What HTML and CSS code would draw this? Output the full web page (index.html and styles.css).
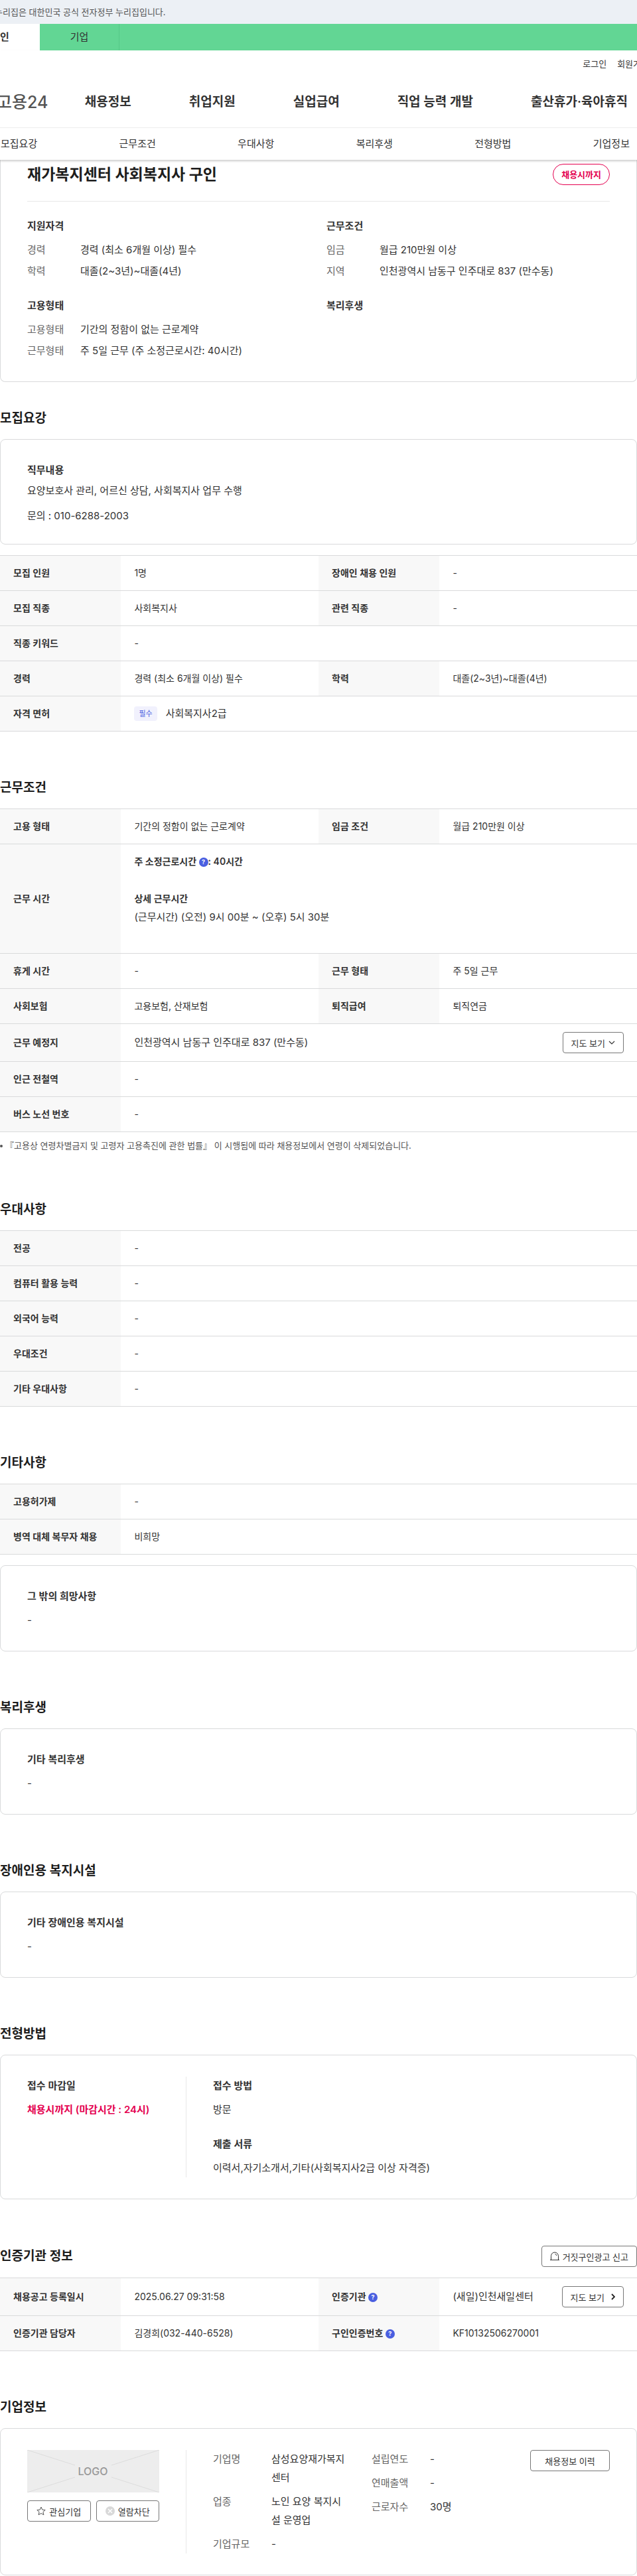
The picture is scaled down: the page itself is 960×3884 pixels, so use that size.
FILE: index.html
```html
<!DOCTYPE html>
<html lang="ko">
<head>
  <meta charset="UTF-8">
  <meta name="viewport" content="width=device-width, initial-scale=1.0">
  <title>고용24 채용정보</title>
  <link rel="stylesheet" href="styles.css">
</head>
<body>
  <div class="gov-bar"><p>누리집은 대한민국 공식 전자정부 누리집입니다.</p></div>

  <nav class="member-tabs">
    <a href="#" class="active">개인</a>
    <a href="#">기업</a>
  </nav>

  <header>
    <div class="util">
      <a href="#">로그인</a>
      <a href="#">회원가입</a>
    </div>
    <div class="gnb">
      <a href="#" class="logo">고용24</a>
      <nav>
        <a href="#">채용정보</a>
        <a href="#">취업지원</a>
        <a href="#">실업급여</a>
        <a href="#">직업 능력 개발</a>
        <a href="#">출산휴가·육아휴직</a>
      </nav>
    </div>
    <nav class="anchor-tabs">
      <a href="#recruit">모집요강</a>
      <a href="#work">근무조건</a>
      <a href="#prefer">우대사항</a>
      <a href="#welfare">복리후생</a>
      <a href="#method">전형방법</a>
      <a href="#company">기업정보</a>
    </nav>
  </header>

  <main>
    <div class="card summary">
      <div class="summary-title">
        <h1>재가복지센터 사회복지사 구인</h1>
        <span class="deadline">채용시까지</span>
      </div>
      <div class="summary-grid">
        <div>
          <h3>지원자격</h3>
          <dl>
            <dt>경력</dt><dd>경력 (최소 6개월 이상) 필수</dd>
            <dt>학력</dt><dd>대졸(2~3년)~대졸(4년)</dd>
          </dl>
        </div>
        <div>
          <h3>근무조건</h3>
          <dl>
            <dt>임금</dt><dd>월급 210만원 이상</dd>
            <dt>지역</dt><dd>인천광역시 남동구 인주대로 837 (만수동)</dd>
          </dl>
        </div>
        <div>
          <h3>고용형태</h3>
          <dl>
            <dt>고용형태</dt><dd>기간의 정함이 없는 근로계약</dd>
            <dt>근무형태</dt><dd>주 5일 근무 (주 소정근로시간: 40시간)</dd>
          </dl>
        </div>
        <div>
          <h3>복리후생</h3>
        </div>
      </div>
    </div>

    <section id="recruit" class="first">
      <div class="section-head"><h2>모집요강</h2></div>
      <div class="card job-desc">
        <h3>직무내용</h3>
        <p>요양보호사 관리, 어르신 상담, 사회복지사 업무 수행</p>
        <p>문의 : 010-6288-2003</p>
      </div>
      <table>
        <colgroup><col class="col-th"><col><col class="col-th"><col></colgroup>
        <tr><th scope="row">모집 인원</th><td>1명</td><th scope="row">장애인 채용 인원</th><td>-</td></tr>
        <tr><th scope="row">모집 직종</th><td>사회복지사</td><th scope="row">관련 직종</th><td>-</td></tr>
        <tr><th scope="row">직종 키워드</th><td colspan="3">-</td></tr>
        <tr><th scope="row">경력</th><td>경력 (최소 6개월 이상) 필수</td><th scope="row">학력</th><td>대졸(2~3년)~대졸(4년)</td></tr>
        <tr>
          <th scope="row">자격 면허</th>
          <td colspan="3"><div class="license"><span class="tag">필수</span><span>사회복지사2급</span></div></td>
        </tr>
      </table>
    </section>

    <section id="work">
      <div class="section-head"><h2>근무조건</h2></div>
      <table>
        <colgroup><col class="col-th"><col><col class="col-th"><col></colgroup>
        <tr><th scope="row">고용 형태</th><td>기간의 정함이 없는 근로계약</td><th scope="row">임금 조건</th><td>월급 210만원 이상</td></tr>
        <tr>
          <th scope="row">근무 시간</th>
          <td colspan="3" class="hours">
            <p class="hours-title">주 소정근로시간 <button type="button" class="help" aria-label="도움말">?</button>: 40시간</p>
            <p class="hours-title">상세 근무시간</p>
            <p class="hours-detail">(근무시간) (오전) 9시 00분 ~ (오후) 5시 30분</p>
          </td>
        </tr>
        <tr><th scope="row">휴게 시간</th><td>-</td><th scope="row">근무 형태</th><td>주 5일 근무</td></tr>
        <tr><th scope="row">사회보험</th><td>고용보험, 산재보험</td><th scope="row">퇴직급여</th><td>퇴직연금</td></tr>
        <tr>
          <th scope="row">근무 예정지</th>
          <td colspan="3">
            <div class="place">
              <span>인천광역시 남동구 인주대로 837 (만수동)</span>
              <button type="button" class="btn">지도 보기
                <svg width="10" height="10" viewBox="0 0 10 10"><path d="M1 3l4 4 4-4" fill="none" stroke="#333" stroke-width="1.2"/></svg>
              </button>
            </div>
          </td>
        </tr>
        <tr><th scope="row">인근 전철역</th><td colspan="3">-</td></tr>
        <tr><th scope="row">버스 노선 번호</th><td colspan="3">-</td></tr>
      </table>
      <p class="note">『고용상 연령차별금지 및 고령자 고용촉진에 관한 법률』 이 시행됨에 따라 채용정보에서 연령이 삭제되었습니다.</p>
    </section>

    <section id="prefer">
      <div class="section-head"><h2>우대사항</h2></div>
      <table>
        <colgroup><col class="col-th"><col></colgroup>
        <tr><th scope="row">전공</th><td>-</td></tr>
        <tr><th scope="row">컴퓨터 활용 능력</th><td>-</td></tr>
        <tr><th scope="row">외국어 능력</th><td>-</td></tr>
        <tr><th scope="row">우대조건</th><td>-</td></tr>
        <tr><th scope="row">기타 우대사항</th><td>-</td></tr>
      </table>
    </section>

    <section>
      <div class="section-head"><h2>기타사항</h2></div>
      <table>
        <colgroup><col class="col-th"><col></colgroup>
        <tr><th scope="row">고용허가제</th><td>-</td></tr>
        <tr><th scope="row">병역 대체 복무자 채용</th><td>비희망</td></tr>
      </table>
      <div class="card after-table">
        <h3>그 밖의 희망사항</h3>
        <p>-</p>
      </div>
    </section>

    <section id="welfare">
      <div class="section-head"><h2>복리후생</h2></div>
      <div class="card">
        <h3>기타 복리후생</h3>
        <p>-</p>
      </div>
    </section>

    <section>
      <div class="section-head"><h2>장애인용 복지시설</h2></div>
      <div class="card">
        <h3>기타 장애인용 복지시설</h3>
        <p>-</p>
      </div>
    </section>

    <section id="method">
      <div class="section-head"><h2>전형방법</h2></div>
      <div class="card split">
        <div class="split-left">
          <h3>접수 마감일</h3>
          <p class="red">채용시까지 (마감시간 : 24시)</p>
        </div>
        <div class="split-right">
          <h3>접수 방법</h3>
          <p>방문</p>
          <h3>제출 서류</h3>
          <p>이력서,자기소개서,기타(사회복지사2급 이상 자격증)</p>
        </div>
      </div>
    </section>

    <section>
      <div class="section-head">
        <h2>인증기관 정보</h2>
        <button type="button" class="btn">
          <svg width="14" height="14" viewBox="0 0 14 14" fill="none" stroke="#333"><path d="M0 12.5h14M1.5 12.5V6.5a5.5 5.5 0 0 1 11 0v6M7.5 3.5q2 .5 2.5 2.5"/></svg>
          거짓구인광고 신고
        </button>
      </div>
      <table>
        <colgroup><col class="col-th"><col><col class="col-th"><col></colgroup>
        <tr>
          <th scope="row">채용공고 등록일시</th><td>2025.06.27 09:31:58</td>
          <th scope="row">인증기관 <button type="button" class="help" aria-label="도움말">?</button></th>
          <td>
            <div class="place">
              <span>(새일)인천새일센터</span>
              <button type="button" class="btn map-link">지도 보기
                <svg width="6" height="10" viewBox="0 0 6 10"><path d="M1 1l4 4-4 4" fill="none" stroke="#222" stroke-width="1.8"/></svg>
              </button>
            </div>
          </td>
        </tr>
        <tr>
          <th scope="row">인증기관 담당자</th><td>김경희(032-440-6528)</td>
          <th scope="row">구인인증번호 <button type="button" class="help" aria-label="도움말">?</button></th><td>KF10132506270001</td>
        </tr>
      </table>
    </section>

    <section id="company">
      <div class="section-head"><h2>기업정보</h2></div>
      <div class="card split">
        <div class="split-left">
          <svg class="company-logo" viewBox="0 0 199 64">
            <rect width="199" height="64" fill="#ededed"/>
            <path d="M0 0l72 23M199 0l-72 23M0 64l72-23M199 64l-72-23" stroke="#dcdcdc"/>
            <text x="99" y="38" text-anchor="middle">LOGO</text>
          </svg>
          <div class="logo-buttons">
            <button type="button" class="btn">
              <svg width="14" height="14" viewBox="0 0 14 14"><path d="M7 1l1.8 4.1 4.4.4-3.3 2.9 1 4.4L7 10.5l-3.900 2.300 1-4.400L.8 5.500l4.400-.4z" fill="none" stroke="#555"/></svg>
              관심기업
            </button>
            <button type="button" class="btn">
              <svg width="14" height="14" viewBox="0 0 14 14"><circle cx="7" cy="7" r="7" fill="#d8d8d8"/><path d="M4 4l6 6M10 4l-6 6" stroke="#fff" stroke-width="1.4"/></svg>
              열람차단
            </button>
          </div>
        </div>
        <div class="split-right company-info">
          <dl>
            <dt>기업명</dt><dd>삼성요양재가복지센터</dd>
            <dt>업종</dt><dd>노인 요양 복지시설 운영업</dd>
            <dt>기업규모</dt><dd>-</dd>
          </dl>
          <dl>
            <dt>설립연도</dt><dd>-</dd>
            <dt>연매출액</dt><dd>-</dd>
            <dt>근로자수</dt><dd>30명</dd>
          </dl>
          <button type="button" class="btn history">채용정보 이력</button>
        </div>
      </div>
    </section>
  </main>
</body>
</html>
```
FILE: styles.css
```css
:root {
  --green: #62d694;
  --red: #e4004f;
  --blue: #4a5fe0;
  --line: #d9dadb;
  --th-bg: #f8f8f8;
}

* {
  box-sizing: border-box;
  margin: 0;
  padding: 0;
}

body {
  font-family: Inter, "Noto Sans CJK KR", sans-serif;
  font-size: 15px;
  line-height: 28px;
  color: #333;
  background: #fff;
  overflow-x: hidden;
}

a {
  color: inherit;
  text-decoration: none;
}

.gov-bar {
  height: 36px;
  background: #ecf0f5;
  font-size: 13px;
  line-height: 36px;
  color: #555;
}

.gov-bar p {
  margin-left: -8px;
}

.member-tabs {
  display: flex;
  height: 40px;
  background: var(--green);
  line-height: 40px;
}

.member-tabs a {
  width: 120px;
  text-align: center;
  border-right: 1px solid #56c988;
}

.member-tabs .active {
  margin-left: -60px;
  background: #fff;
  border-right: none;
  font-weight: 600;
}

header {
  position: relative;
  z-index: 1;
  background: #fff;
  box-shadow: 0 2px 3px rgba(0, 0, 0, 0.2);
}

.util {
  display: flex;
  justify-content: flex-end;
  gap: 16px;
  margin-right: -18px;
  padding-top: 8px;
  font-size: 13px;
  line-height: 24px;
}

.gnb {
  display: flex;
  align-items: center;
  justify-content: space-between;
  height: 85px;
  padding-top: 8px;
  padding-right: 14px;
  border-bottom: 1px solid #eee;
  white-space: nowrap;
}

.logo {
  margin-left: -5px;
  font-size: 25px;
  font-weight: 500;
  color: #555;
}

.gnb nav {
  display: flex;
  gap: 87px;
  font-size: 19px;
  font-weight: 600;
}

.anchor-tabs {
  display: flex;
  justify-content: space-between;
  padding: 10px 11px 10px 1px;
}

h1 {
  font-size: 23px;
  font-weight: 700;
  color: #1d1d1d;
}

h2 {
  font-size: 19px;
  font-weight: 600;
  color: #1d1d1d;
}

h3 {
  font-size: 15px;
  font-weight: 600;
}

section {
  margin-top: 70px;
}

section.first {
  margin-top: 40px;
}

.section-head {
  display: flex;
  align-items: center;
  justify-content: space-between;
  min-height: 30px;
  margin-bottom: 16px;
}

.card {
  padding: 32px 40px;
  border: 1px solid var(--line);
  border-radius: 8px;
}

.card p {
  margin-top: 8px;
}

.card.after-table {
  margin-top: 16px;
}

/* summary */
.summary {
  padding-top: 6px;
  border-top: none;
  border-radius: 0 0 8px 8px;
}

.summary-title {
  display: flex;
  align-items: center;
  justify-content: space-between;
  padding-bottom: 24px;
  border-bottom: 1px solid #e8e8e8;
}

.deadline {
  padding: 0 12px;
  border: 1px solid var(--red);
  border-radius: 16px;
  font-size: 13px;
  font-weight: 600;
  line-height: 30px;
  color: var(--red);
}

.summary-grid {
  display: grid;
  grid-template-columns: 1fr 1fr;
  gap: 24px;
  padding-top: 23px;
}

.summary dl {
  display: grid;
  grid-template-columns: 80px 1fr;
  gap: 4px 0;
  margin-top: 8px;
}

dt {
  color: #666;
}

.job-desc p {
  margin-top: 7px;
  line-height: 20px;
}

.job-desc p + p {
  margin-top: 18px;
}

/* tables */
table {
  width: 100%;
  table-layout: fixed;
  border-collapse: collapse;
  border-top: 1px solid var(--line);
  font-size: 14px;
}

.card + table {
  margin-top: 16px;
}

.col-th {
  width: 19%;
}

th,
td {
  padding: 12px 20px;
  border-bottom: 1px solid var(--line);
  text-align: left;
}

th {
  background: var(--th-bg);
  font-weight: 600;
}

.license {
  display: flex;
  align-items: center;
  gap: 13px;
  font-size: 15px;
}

.tag {
  padding: 0 7px;
  border-radius: 4px;
  background: #f1f1fd;
  font-size: 11px;
  line-height: 22px;
  color: var(--blue);
}

.hours {
  font-size: 15px;
}

.hours-title {
  margin-bottom: 28px;
  font-size: 14px;
  font-weight: 600;
}

.hours-title + .hours-title {
  margin-bottom: 0;
}

.hours-detail {
  margin-bottom: 28px;
}

.place {
  display: flex;
  align-items: center;
  justify-content: space-between;
  font-size: 15px;
  white-space: nowrap;
}

.help {
  width: 14px;
  height: 14px;
  border: none;
  border-radius: 50%;
  background: var(--blue);
  font-family: inherit;
  font-size: 9px;
  font-weight: 700;
  line-height: 14px;
  vertical-align: 1px;
  color: #fff;
}

.btn {
  display: inline-flex;
  align-items: center;
  justify-content: center;
  gap: 5px;
  height: 32px;
  padding: 0 12px;
  border: 1px solid #777;
  border-radius: 4px;
  background: #fff;
  font-family: inherit;
  font-size: 13px;
  color: #333;
  white-space: nowrap;
}

.map-link {
  gap: 10px;
}

.note {
  margin-top: 8px;
  font-size: 13px;
  line-height: 24px;
  color: #555;
}

.note::before {
  content: "";
  display: inline-block;
  width: 4px;
  height: 4px;
  margin-right: 4px;
  border-radius: 50%;
  background: #555;
  vertical-align: 2px;
}

/* two part cards */
.split {
  display: flex;
}

.split-left {
  flex: none;
  width: 240px;
  padding-right: 40px;
  border-right: 1px solid #e8e8e8;
}

.split-right {
  flex: 1;
  padding-left: 40px;
}

.split-right p + h3 {
  margin-top: 24px;
}

.red {
  font-weight: 600;
  color: var(--red);
  white-space: nowrap;
}

.company-logo {
  display: block;
  width: 100%;
  height: 64px;
}

.company-logo text {
  font-size: 16px;
  font-weight: 500;
  fill: #999;
}

.logo-buttons {
  display: grid;
  grid-template-columns: 1fr 1fr;
  gap: 8px;
  margin-top: 12px;
}

.company-info {
  display: flex;
  align-items: flex-start;
}

.company-info dl {
  display: grid;
  grid-template-columns: 88px 1fr;
  gap: 8px 0;
  width: 239px;
  padding-right: 40px;
}

.company-info .history {
  width: 120px;
  margin-left: auto;
}
```
